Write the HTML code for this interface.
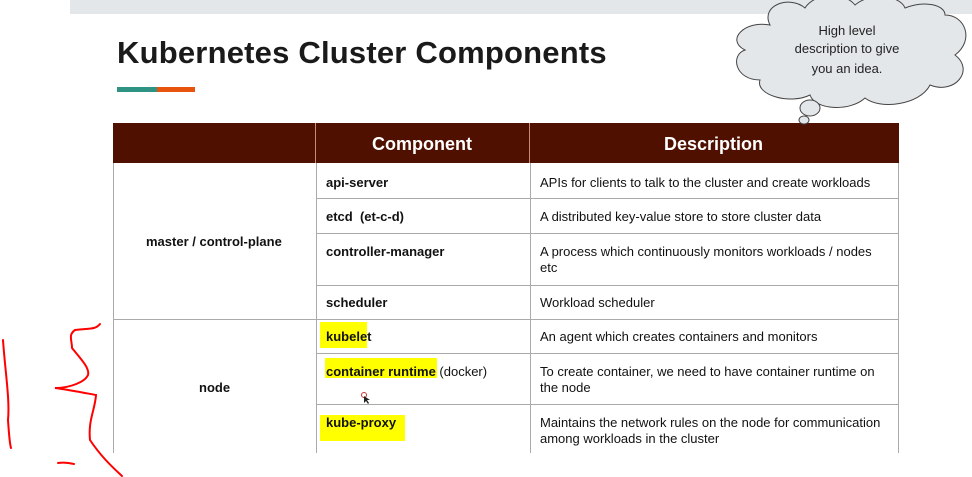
<!DOCTYPE html>
<html><head><style>
body{margin:0;width:972px;height:477px;background:#fff;position:relative;overflow:hidden;font-family:"Liberation Sans",Arial,sans-serif}
.bar{position:absolute;left:70px;top:0;width:902px;height:14px;background:#e4e7ea}
h1{position:absolute;left:117px;top:35px;margin:0;font-size:31px;font-weight:bold;color:#1a1a1a;letter-spacing:0.2px}
.u1{position:absolute;left:117px;top:87px;width:40px;height:5px;background:#2e9382}
.u2{position:absolute;left:157px;top:87px;width:38px;height:5px;background:#e8540e}
.hd{position:absolute;left:113px;top:123px;width:786px;height:40px;background:#4f1000}
.hd span{position:absolute;top:11px;color:#fff;font-weight:bold;font-size:18px}
.vl{position:absolute;width:1px;background:#aaa}
.hl{position:absolute;height:1px;background:#aaa}
.t{position:absolute;font-size:13px;color:#111}
.b{font-weight:bold}
.hi{position:absolute;background:#ffff00}
</style></head><body>
<div class="bar"></div>
<h1>Kubernetes Cluster Components</h1>
<div class="u1"></div><div class="u2"></div>
<div class="hd"><span style="left:259px">Component</span><span style="left:551px">Description</span>
<div style="position:absolute;left:202px;top:0;width:1px;height:40px;background:#c98a7a"></div>
<div style="position:absolute;left:416px;top:0;width:1px;height:40px;background:#c98a7a"></div></div>
<div class="vl" style="left:113px;top:163px;height:290px"></div>
<div class="vl" style="left:316px;top:163px;height:290px"></div>
<div class="vl" style="left:530px;top:163px;height:290px"></div>
<div class="vl" style="left:898px;top:163px;height:290px"></div>
<div class="hl" style="left:316px;top:198px;width:583px"></div>
<div class="hl" style="left:316px;top:233px;width:583px"></div>
<div class="hl" style="left:316px;top:285px;width:583px"></div>
<div class="hl" style="left:113px;top:319px;width:786px"></div>
<div class="hl" style="left:316px;top:353px;width:583px"></div>
<div class="hl" style="left:316px;top:404px;width:583px"></div>
<div class="hi" style="left:320px;top:322px;width:47px;height:26px"></div>
<div class="hi" style="left:325px;top:358px;width:112px;height:20px"></div>
<div class="hi" style="left:320px;top:415px;width:85px;height:26px"></div>
<div class="t b" style="left:146px;top:234px">master / control-plane</div>
<div class="t b" style="left:199px;top:380px">node</div>
<div class="t b" style="left:326px;top:175px">api-server</div>
<div class="t b" style="left:326px;top:209px">etcd &nbsp;(et-c-d)</div>
<div class="t b" style="left:326px;top:244px">controller-manager</div>
<div class="t b" style="left:326px;top:295px">scheduler</div>
<div class="t b" style="left:326px;top:329px">kubelet</div>
<div class="t" style="left:326px;top:364px"><b>container runtime</b> (docker)</div>
<div class="t b" style="left:326px;top:415px">kube-proxy</div>
<div class="t" style="left:540px;top:175px">APIs for clients to talk to the cluster and create workloads</div>
<div class="t" style="left:540px;top:209px">A distributed key-value store to store cluster data</div>
<div class="t" style="left:540px;top:244px;width:350px;line-height:16px">A process which continuously monitors workloads / nodes etc</div>
<div class="t" style="left:540px;top:295px">Workload scheduler</div>
<div class="t" style="left:540px;top:329px">An agent which creates containers and monitors</div>
<div class="t" style="left:540px;top:364px;width:350px;line-height:16px">To create container, we need to have container runtime on the node</div>
<div class="t" style="left:540px;top:415px;width:355px;line-height:16px">Maintains the network rules on the node for communication among workloads in the cluster</div>
<svg style="position:absolute;left:0;top:0" width="972" height="477">
<path d="M770,25 C760,5 790,-5 805,8 C815,-8 845,-8 855,5 C870,-8 900,-5 905,8 C925,0 945,5 945,15 C965,15 975,40 955,55 C975,70 955,95 930,85 C920,105 880,110 865,98 C850,112 815,110 810,95 C790,105 755,95 760,80 C735,80 730,55 745,50 C725,40 745,20 770,25 Z" fill="#e4e7ea" stroke="#444" stroke-width="1"/>
<ellipse cx="810" cy="108" rx="10" ry="8" fill="#e4e7ea" stroke="#444"/>
<ellipse cx="804" cy="120" rx="5" ry="4" fill="#e4e7ea" stroke="#444"/>
<text x="847" y="35" font-size="13" text-anchor="middle" fill="#222" font-family="Liberation Sans">High level</text>
<text x="847" y="53" font-size="13" text-anchor="middle" fill="#222" font-family="Liberation Sans">description to give</text>
<text x="847" y="73" font-size="13" text-anchor="middle" fill="#222" font-family="Liberation Sans">you an idea.</text>
<g fill="none" stroke="#f00" stroke-width="2" stroke-linecap="round">
<path d="M3,340 C5,370 10,400 8,420 C9,435 10,445 11,448"/>
<path d="M100,324 C95,330 90,328 75,330 C68,335 72,340 72,348 C80,358 90,368 88,375 C85,382 70,388 55,388 C70,390 85,393 96,395 C95,410 88,420 90,440 C100,455 110,465 122,476"/>
<path d="M58,463 C64,462 70,463 74,464"/>
</g>
<circle cx="364" cy="395" r="2.5" fill="none" stroke="#c33"/>
<path d="M364,396 l0,7 l2,-2 l2,3 l1,-1 l-2,-3 l3,0 z" fill="#222"/>
</svg>
</body></html>
